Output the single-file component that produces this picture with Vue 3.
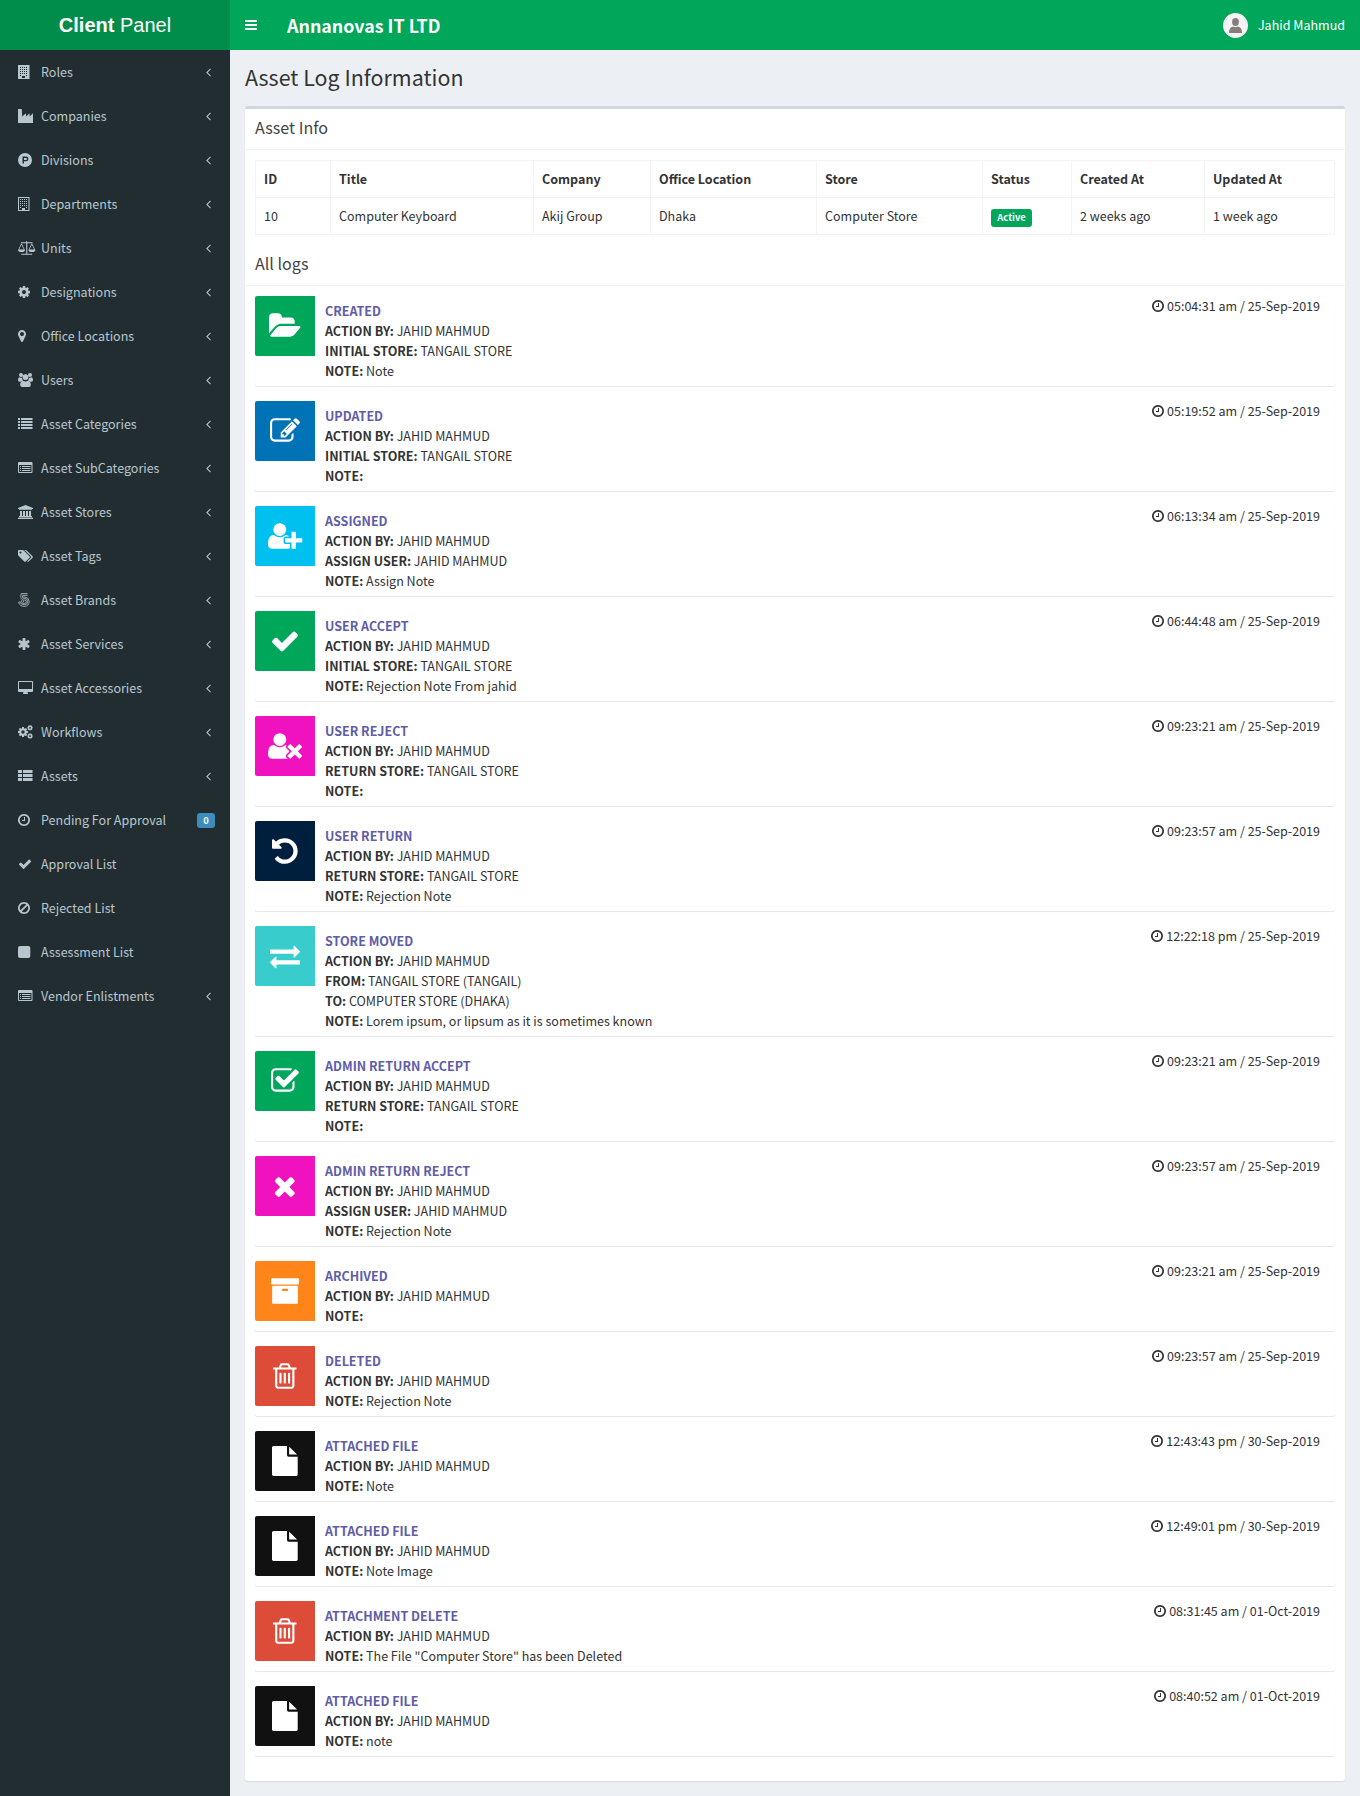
<script setup>
const cog = 'M1152 896q0-106-75-181t-181-75-181 75-75 181 75 181 181 75 181-75 75-181zm512-109v222q0 12-8 23t-20 13l-185 28q-19 54-39 91 35 50 107 138 10 12 10 25t-9 23q-27 37-99 108t-94 71q-12 0-26-9l-138-108q-44 23-91 38-16 136-29 186-7 28-36 28h-222q-14 0-24.5-8.5t-11.5-21.5l-28-184q-49-16-90-37l-141 107q-10 9-25 9-14 0-25-11-126-114-165-168-7-10-7-23 0-12 8-23 15-21 51-66.5t54-70.5q-27-50-41-99l-183-27q-13-2-21-12.5t-8-23.5v-222q0-12 8-23t19-13l186-28q14-46 39-92-40-57-107-138-10-12-10-24 0-10 9-23 26-36 98.5-107.5t94.5-71.5q13 0 26 10l138 107q44-23 91-38 16-136 29-186 7-28 36-28h222q14 0 24.5 8.5t11.5 21.5l28 184q49 16 90 37l142-107q9-9 24-9 13 0 25 10 129 119 165 170 7 8 7 22 0 12-8 23-15 21-51 66.5t-54 70.5q26 50 41 98l183 28q13 2 21 12.5t8 23.5z'
const head = 'M704 896q-159 0-271.5-112.5t-112.5-271.5 112.5-271.5 271.5-112.5 271.5 112.5 112.5 271.5-112.5 271.5-271.5 112.5z'

// Each glyph: viewBox x offset, viewBox width, em height, path list
const big = (x, w, ...d) => ({ x, w, em: 1792, paths: d.map((p) => (typeof p === 'string' ? { d: p } : p)) })
const small = (w, ...d) => ({ x: 0, w, em: 14, paths: d.map((p) => (typeof p === 'string' ? { d: p } : p)) })

const dots = (xs, ys) => ys.map((y) => xs.map((x) => `M${x} ${y}h1v1h-1z`).join('')).join('')

const icons = {
  bars: big(128, 1536, 'M1664 1344v128q0 26-19 45t-45 19h-1408q-26 0-45-19t-19-45v-128q0-26 19-45t45-19h1408q26 0 45 19t19 45zm0-512v128q0 26-19 45t-45 19h-1408q-26 0-45-19t-19-45v-128q0-26 19-45t45-19h1408q26 0 45 19t19 45zm0-512v128q0 26-19 45t-45 19h-1408q-26 0-45-19t-19-45v-128q0-26 19-45t45-19h1408q26 0 45 19t19 45z'),
  building: small(11, 'M0 0h11.5v14H0z' + dots([2, 4, 6, 8], [2, 4, 6, 8]) + 'M2 10h1v1H2zM8 10h1v1H8zM4 11h3v2H4z'),
  buildingO: small(11, 'M0 0h11.5v14H0zM1 1v12h3v-2h3v2h3.5V1z' + dots([2, 4, 6, 8], [2, 4, 6, 8]) + 'M2 10h1v1H2zM8 10h1v1H8z'),
  industry: small(15, 'M0 0h3.8l.4 7.4L8 4.3v3.1l3.6-3.1v3.1L15 4.3V14H0z'),
  product: small(14, 'M7 0a7 7 0 1 1 0 14A7 7 0 0 1 7 0zM4.5 3.6v6.8H6V8.3h2a2.35 2.35 0 0 0 0-4.7zM6 5h2a.95.95 0 0 1 0 1.9H6z'),
  balance: small(17.5, 'M8.2 0h1v1.3h5.3v.9H9.3v10.6h4.9v1H3.300v-1h4.9V2.200H3v-.9h5.200z', 'M3.500 2l3.400 6.900q0 2-3.400 2T.1 8.900zM3.500 3.800L1.100 8.600h4.800zM13.900 2l3.400 6.900q0 2-3.400 2t-3.400-2zM13.900 3.800l-2.400 4.800h4.800z'),
  cog: big(128, 1536, cog),
  marker: big(384, 1024, 'M1152 640q0-106-75-181t-181-75-181 75-75 181 75 181 181 75 181-75 75-181zm256 0q0 109-33 179l-364 774q-16 33-47.5 52t-67.5 19-67.5-19-46.5-52l-365-774q-33-70-33-179 0-212 150-362t362-150 362 150 150 362z'),
  users: small(15, 'M3 0a2 2 0 1 1 0 4 2 2 0 0 1 0-4zM12 0a2 2 0 1 1 0 4 2 2 0 0 1 0-4zM7.500 1.200a2.900 2.900 0 1 1 0 5.800 2.900 2.900 0 0 1 0-5.800z', 'M1.500 4.200q2 1 2.600.6 0 2 1 3-1.700 0-2.300 1H1.500Q0 8.700 0 7.300q0-3 1.500-3.100zM13.500 4.200q-2 1-2.600.6 0 2-1 3 1.700 0 2.300 1h1.300q1.500-.1 1.500-1.500 0-3-1.500-3.100z', 'M4.800 7.700q2.700 1.500 5.400 0 2.600.3 2.600 4.300 0 2-2 2H4.200q-2 0-2-2 0-4 2.600-4.300z'),
  list: small(14.5, 'M0 1h2v2H0zM3 1h11.500v2H3zM0 4h2v2H0zM3 4h11.500v2H3zM0 7h2v2H0zM3 7h11.500v2H3zM0 10h2v2H0zM3 10h11.500v2H3z'),
  listAlt: small(14.5, 'M1 1h12.500q1 0 1 1v9q0 1-1 1H1q-1 0-1-1V2q0-1 1-1zM1 4v7h12.500V4zM2 5h1v1H2zM4 5h8.500v1H4zM2 7h1v1H2zM4 7h8.500v1H4zM2 9h1v1H2zM4 9h8.500v1H4z'),
  bank: small(15, 'M7.500 0L15 3v1h-1v.8H1V4H0V3zM2 6h2v5h1V6h2v5h1V6h2v5h1V6h2v5h1v1H1v-1h1zM.5 12.500h14v.5h.5v1H0v-1h.5z'),
  tags: big(0, 1920, 'M448 448q0-53-37.500-90.500t-90.500-37.500-90.500 37.500-37.500 90.500 37.500 90.500 90.500 37.500 90.500-37.500 37.500-90.500zm1067 576q0 53-37 90l-491 492q-39 37-91 37-53 0-90-37l-715-716q-38-37-64.500-101t-26.500-117v-416q0-52 38-90t90-38h416q53 0 117 26.500t102 64.500l715 714q37 39 37 91zm384 0q0 53-37 90l-491 492q-39 37-91 37-36 0-59-14t-53-45l470-470q37-37 37-90 0-52-37-91l-715-714q-38-38-102-64.500t-117-26.500h224q53 0 117 26.500t102 64.500l715 714q37 39 37 91z'),
  fiveHundred: small(12, { d: 'M9.600 .6H3.200L2.600 4.400M9.600 2.300H4.800L4.500 3.900M2.600 5.900Q4.300 3.800 7 4q4.100.6 4.200 4.600-.2 4.400-4.700 4.800-4.500.1-6-4.100L2 8.800q.9 3 4.200 3 3.200 0 3.500-3.100 0-3-3-3.300-3.100.2-3.300 3.200.3 1.800 2.900 2 1.900-.1 2-2-.2-1.500-1.800-1.500-1.600.2-1 1.900', stroke: true }),
  asterisk: big(128, 1536, 'M1546 1050q46 26 59.500 77.500t-12.500 97.500l-64 110q-26 46-77.500 59.500t-97.500-12.500l-266-153v307q0 52-38 90t-90 38h-128q-52 0-90-38t-38-90v-307l-266 153q-46 26-97.500 12.500t-77.500-59.500l-64-110q-26-46-12.500-97.500t59.500-77.500l266-154-266-154q-46-26-59.500-77.500t12.500-97.500l64-110q26-46 77.500-59.500t97.500 12.500l266 153v-307q0-52 38-90t90-38h128q52 0 90 38t38 90v307l266-153q46-26 97.500-12.500t77.500 59.500l64 110q26 46 12.500 97.500t-59.500 77.500l-266 154z'),
  desktop: small(15, 'M1 0h13q1 0 1 1v9q0 1-1 1H9.500q0 1 .5 1.300v.7H5v-.7q.5-.3.500-1.300H1q-1 0-1-1V1q0-1 1-1zM1 1v7h13V1z'),
  cogs: big(0, 1920, { d: cog, transform: 'translate(-107 149) scale(.835)' }, { d: cog, transform: 'translate(1130 -50) scale(.46)' }, { d: cog, transform: 'translate(1130 1000) scale(.46)' }),
  thList: small(14.5, 'M0 1h4v3H0zM5 1h9.500v3H5zM0 5h4v3H0zM5 5h9.500v3H5zM0 9h4v3H0zM5 9h9.500v3H5z'),
  clock: big(128, 1536, 'M1024 544v448q0 14-9 23t-23 9h-320q-14 0-23-9t-9-23v-64q0-14 9-23t23-9h224v-352q0-14 9-23t23-9h64q14 0 23 9t9 23zm416 352q0-148-73-273t-198-198-273-73-273 73-198 198-73 273 73 273 198 198 273 73 273-73 198-198 73-273zm224 0q0 209-103 385.500t-279.500 279.500-385.500 103-385.500-103-279.500-279.500-103-385.500 103-385.500 279.500-279.500 385.500-103 385.500 103 279.500 279.500 103 385.500z'),
  check: big(0, 1792, 'M1671 566q0 40-28 68l-724 724-136 136q-28 28-68 28t-68-28l-136-136-362-362q-28-28-28-68t28-68l136-136q28-28 68-28t68 28l294 295 656-657q28-28 68-28t68 28l136 136q28 28 28 68z'),
  ban: big(128, 1536, 'M1440 893q0-161-87-295l-754 753q137 89 297 89 111 0 211.500-43.500t173.500-116.500 116-174.500 43-212.500zm-999 299l755-754q-135-91-300-91-148 0-273 73t-198 199-73 274q0 162 89 299zm1223-299q0 157-61 300t-163.500 246-245 164-298.500 61-298.500-61-245-164-163.500-246-61-300 61-299.500 163.500-245.500 245-164 298.500-61 298.500 61 245 164 163.500 245.500 61 299.500z'),
  square: small(12, 'M2 1h8.300q2 0 2 2v8q0 2-2 2H2q-2 0-2-2V3q0-2 2-2z'),
  angle: big(589, 614, 'M1203 544q0 13-10 23l-393 393 393 393q10 10 10 23t-10 23l-50 50q-10 10-23 10t-23-10l-466-466q-10-10-10-23t10-23l466-466q10-10 23-10t23 10l50 50q10 10 10 23z'),
  folder: big(0, 1920, 'M1879 952q0 31-31 66l-336 396q-43 51-120.500 86.500t-143.500 35.500h-1088q-34 0-60.500-13t-26.500-43q0-31 31-66l336-396q43-51 120.500-86.500t143.500-35.500h1088q34 0 60.500 13t26.500 43zm-343-344v160h-832q-94 0-197 47.500t-164 119.500l-337 396-5 6q0-4-.5-12.500t-.5-12.500v-960q0-92 66-158t158-66h320q92 0 158 66t66 158v32h544q92 0 158 66t66 158z'),
  edit: big(0, 1792, 'M888 1184l116-116-152-152-116 116v56h96v96h56zm440-720q-16-16-33 1l-350 350q-17 17-1 33t33-1l350-350q17-17 1-33zm80 594v190q0 119-84.500 203.500t-203.500 84.500h-832q-119 0-203.500-84.500t-84.500-203.500v-832q0-119 84.500-203.500t203.500-84.500h832q63 0 117 25 15 7 18 23 3 17-9 29l-49 49q-14 14-32 8-23-6-45-6h-832q-66 0-113 47t-47 113v832q0 66 47 113t113 47h832q66 0 113-47t47-113v-126q0-13 9-22l64-64q15-15 35-7t20 29zm-96-738l288 288-672 672h-288v-288zm444 132l-92 92-288-288 92-92q28-28 68-28t68 28l152 152q28 28 28 68t-28 68z'),
  userPlus: big(0, 2048, head, 'M1664 1024h352q13 0 22.500 9.500t9.500 22.500v192q0 13-9.500 22.500t-22.500 9.500h-352v352q0 13-9.500 22.500t-22.500 9.500h-192q-13 0-22.500-9.500t-9.500-22.500v-352h-352q-13 0-22.500-9.500t-9.500-22.500v-192q0-13 9.500-22.500t22.500-9.500h352v-352q0-13 9.500-22.500t22.500-9.500h192q13 0 22.500 9.500t9.500 22.500v352zm-736 224q0 52 38 90t90 38h256v238q-68 50-171 50h-874q-121 0-194-69t-73-190q0-53 3.500-103.500t14-109 26.500-108.500 43-97.500 62-81 85.500-53.500 111.500-20q19 0 39 17 79 61 154.500 91.500t164.500 30.500 164.500-30.500 154.500-91.500q20-17 39-17 132 0 217 96h-223q-52 0-90 38t-38 90v192z'),
  userTimes: big(0, 2048, head, 'M1781 1216l249 249q9 9 9 23 0 13-9 22l-136 136q-9 9-22 9-14 0-23-9l-249-249-249 249q-9 9-23 9-13 0-22-9l-136-136q-9-9-9-22 0-14 9-23l249-249-249-249q-9-9-9-23 0-13 9-22l136-136q9-9 22-9 14 0 23 9l249 249 249-249q9-9 23-9 13 0 22 9l136 136q9 9 9 22 0 14-9 23zm-498 0l-181 181q-37 37-37 91 0 53 37 90l83 83q-21 3-44 3h-874q-121 0-194-69t-73-190q0-53 3.500-103.500t14-109 26.500-108.500 43-97.500 62-81 85.500-53.500 111.500-20q19 0 39 17 154 122 319 122t319-122q20-17 39-17 28 0 57 6-28 27-41 50t-13 56q0 54 37 91z'),
  undo: big(128, 1536, 'M1664 896q0 156-61 298t-164 245-245 164-298 61q-172 0-327-72.500t-264-204.500q-7-10-6.500-22.500t8.500-20.500l137-138q10-9 25-9 16 2 23 12 73 95 179 147t225 52q104 0 198.500-40.500t163.500-109.500 109.500-163.500 40.500-198.500-40.500-198.500-109.500-163.500-163.500-109.500-198.500-40.500q-98 0-188 35.500t-160 101.500l137 138q31 30 14 69-17 40-59 40h-448q-26 0-45-19t-19-45v-448q0-42 40-59 39-17 69 14l130 129q107-101 244.500-156.500t284.500-55.500q156 0 298 61t245 164 164 245 61 298z'),
  exchange: big(0, 1792, 'M1792 1184v192q0 13-9.500 22.500t-22.500 9.500h-1376v192q0 13-9.500 22.500t-22.500 9.500q-12 0-24-10l-319-320q-9-9-9-22 0-14 9-23l320-320q9-9 23-9 13 0 22.500 9.500t9.500 22.500v192h1376q13 0 22.500 9.500t9.500 22.500zm0-544q0 14-9 23l-320 320q-9 9-23 9-13 0-22.500-9.500t-9.500-22.500v-192h-1376q-13 0-22.500-9.500t-9.500-22.500v-192q0-13 9.500-22.500t22.500-9.500h1376v-192q0-14 9-23t23-9q12 0 24 10l319 319q9 9 9 23z'),
  checkSquare: big(64, 1664, 'M1472 930v318q0 119-84.500 203.500t-203.500 84.500h-832q-119 0-203.500-84.500t-84.500-203.500v-832q0-119 84.500-203.500t203.500-84.500h832q63 0 117 25 15 7 18 23 3 17-9 29l-49 49q-10 10-23 10-3 0-9-2-23-6-45-6h-832q-66 0-113 47t-47 113v832q0 66 47 113t113 47h832q66 0 113-47t47-113v-254q0-13 9-22l64-64q10-10 23-10 6 0 12 3 20 8 20 29zm231-489l-814 814q-24 24-57 24t-57-24l-430-430q-24-24-24-57t24-57l110-110q24-24 57-24t57 24l263 263 647-647q24-24 57-24t57 24l110 110q24 24 24 57t-24 57z'),
  times: big(192, 1408, 'M1490 1322q0 40-28 68l-136 136q-28 28-68 28t-68-28l-294-294-294 294q-28 28-68 28t-68-28l-136-136q-28-28-28-68t28-68l294-294-294-294q-28-28-28-68t28-68l136-136q28-28 68-28t68 28l294 294 294-294q28-28 68-28t68 28l136 136q28 28 28 68t-28 68l-294 294 294 294q28 28 28 68z'),
  archive: big(0, 1792, 'M1088 832q0-26-19-45t-45-19h-256q-26 0-45 19t-19 45 19 45 45 19h256q26 0 45-19t19-45zm576-192v960q0 26-19 45t-45 19h-1408q-26 0-45-19t-19-45v-960q0-26 19-45t45-19h1408q26 0 45 19t19 45zm64-448v256q0 26-19 45t-45 19h-1536q-26 0-45-19t-19-45v-256q0-26 19-45t45-19h1536q26 0 45 19t19 45z'),
  trash: big(192, 1408, 'M704 736v576q0 14-9 23t-23 9h-64q-14 0-23-9t-9-23v-576q0-14 9-23t23-9h64q14 0 23 9t9 23zm256 0v576q0 14-9 23t-23 9h-64q-14 0-23-9t-9-23v-576q0-14 9-23t23-9h64q14 0 23 9t9 23zm256 0v576q0 14-9 23t-23 9h-64q-14 0-23-9t-9-23v-576q0-14 9-23t23-9h64q14 0 23 9t9 23zm128 724v-948h-896v948q0 22 7 40.500t14.500 27 10.500 8.500h832q3 0 10.500-8.500t14.500-27 7-40.500zm-672-1076h448l-48-117q-7-9-17-11h-317q-10 2-17 11zm928 32v64q0 14-9 23t-23 9h-96v948q0 83-47 143.500t-113 60.500h-832q-66 0-113-58.500t-47-141.500v-952h-96q-14 0-23-9t-9-23v-64q0-14 9-23t23-9h309l70-167q15-37 54-63t79-26h320q40 0 79 26t54 63l70 167h309q14 0 23 9t9 23z'),
  file: big(128, 1536, 'M1152 512v-472q22 14 36 28l408 408q14 14 28 36h-472zm-128 32q0 40 28 68t68 28h544v1056q0 40-28 68t-68 28h-1344q-40 0-68-28t-28-68v-1600q0-40 28-68t68-28h800v544z'),
}

const Glyph = (props) => {
  const g = icons[props.name]
  const size = Number(props.size)
  return h(
    'svg',
    { width: (g.w / g.em) * size, height: size, viewBox: `${g.x} 0 ${g.w} ${g.em}`, fill: 'currentColor', overflow: 'visible', style: 'display:block;flex:none' },
    g.paths.map((p) =>
      h('path', p.stroke
        ? { d: p.d, fill: 'none', stroke: 'currentColor', 'stroke-width': 0.8 }
        : { d: p.d, transform: p.transform, 'fill-rule': 'evenodd' })
    )
  )
}
Glyph.props = ['name', 'size']

const menu = [
  ['building', 'Roles', 1], ['industry', 'Companies', 1], ['product', 'Divisions', 1],
  ['buildingO', 'Departments', 1], ['balance', 'Units', 1], ['cog', 'Designations', 1],
  ['marker', 'Office Locations', 1], ['users', 'Users', 1], ['list', 'Asset Categories', 1],
  ['listAlt', 'Asset SubCategories', 1], ['bank', 'Asset Stores', 1], ['tags', 'Asset Tags', 1],
  ['fiveHundred', 'Asset Brands', 1], ['asterisk', 'Asset Services', 1], ['desktop', 'Asset Accessories', 1],
  ['cogs', 'Workflows', 1], ['thList', 'Assets', 1], ['clock', 'Pending For Approval', 0, '0'],
  ['check', 'Approval List', 0], ['ban', 'Rejected List', 0], ['square', 'Assessment List', 0],
  ['listAlt', 'Vendor Enlistments', 1],
].map(([icon, label, arrow, badge]) => ({ icon, label, arrow, badge }))

const columns = [
  ['ID', '10', 75], ['Title', 'Computer Keyboard', 203], ['Company', 'Akij Group', 117],
  ['Office Location', 'Dhaka', 166], ['Store', 'Computer Store', 166], ['Status', 'Active', 89],
  ['Created At', '2 weeks ago', 133], ['Updated At', '1 week ago', 130],
].map(([title, value, width]) => ({ title, value, width }))

const by = ['ACTION BY:', 'JAHID MAHMUD']
const initial = ['INITIAL STORE:', 'TANGAIL STORE']
const returned = ['RETURN STORE:', 'TANGAIL STORE']
const assign = ['ASSIGN USER:', 'JAHID MAHMUD']
const note = (text = '') => ['NOTE:', text]

const logs = [
  { icon: 'folder', tone: 'green', title: 'CREATED', rows: [by, initial, note('Note')], time: '05:04:31 am / 25-Sep-2019' },
  { icon: 'edit', tone: 'blue', title: 'UPDATED', rows: [by, initial, note()], time: '05:19:52 am / 25-Sep-2019' },
  { icon: 'userPlus', tone: 'aqua', title: 'ASSIGNED', rows: [by, assign, note('Assign Note')], time: '06:13:34 am / 25-Sep-2019' },
  { icon: 'check', tone: 'green', title: 'USER ACCEPT', rows: [by, initial, note('Rejection Note From jahid')], time: '06:44:48 am / 25-Sep-2019' },
  { icon: 'userTimes', tone: 'fuchsia', title: 'USER REJECT', rows: [by, returned, note()], time: '09:23:21 am / 25-Sep-2019' },
  { icon: 'undo', tone: 'navy', title: 'USER RETURN', rows: [by, returned, note('Rejection Note')], time: '09:23:57 am / 25-Sep-2019' },
  { icon: 'exchange', tone: 'teal', title: 'STORE MOVED', rows: [by, ['FROM:', 'TANGAIL STORE (TANGAIL)'], ['TO:', 'COMPUTER STORE (DHAKA)'], note('Lorem ipsum, or lipsum as it is sometimes known')], time: '12:22:18 pm / 25-Sep-2019' },
  { icon: 'checkSquare', tone: 'green', title: 'ADMIN RETURN ACCEPT', rows: [by, returned, note()], time: '09:23:21 am / 25-Sep-2019' },
  { icon: 'times', tone: 'fuchsia', title: 'ADMIN RETURN REJECT', rows: [by, assign, note('Rejection Note')], time: '09:23:57 am / 25-Sep-2019' },
  { icon: 'archive', tone: 'orange', title: 'ARCHIVED', rows: [by, note()], time: '09:23:21 am / 25-Sep-2019' },
  { icon: 'trash', tone: 'red', title: 'DELETED', rows: [by, note('Rejection Note')], time: '09:23:57 am / 25-Sep-2019' },
  { icon: 'file', tone: 'black', title: 'ATTACHED FILE', rows: [by, note('Note')], time: '12:43:43 pm / 30-Sep-2019' },
  { icon: 'file', tone: 'black', title: 'ATTACHED FILE', rows: [by, note('Note Image')], time: '12:49:01 pm / 30-Sep-2019' },
  { icon: 'trash', tone: 'red', title: 'ATTACHMENT DELETE', rows: [by, note('The File "Computer Store" has been Deleted')], time: '08:31:45 am / 01-Oct-2019' },
  { icon: 'file', tone: 'black', title: 'ATTACHED FILE', rows: [by, note('note')], time: '08:40:52 am / 01-Oct-2019' },
]
</script>

<script>
import { h } from 'vue'
</script>

<template>
  <div class="page">
    <header class="topbar">
      <div class="logo"><span><b>Client</b> Panel</span></div>
      <nav class="navbar">
        <Glyph name="bars" size="14" />
        <span class="brand">Annanovas IT LTD</span>
        <div class="user">
          <svg width="25" height="25" viewBox="0 0 25 25">
            <circle cx="12.5" cy="12.5" r="12.500" fill="#f5f4f4" />
            <ellipse cx="12.5" cy="9" rx="3.400" ry="4" fill="#877b7c" />
            <path d="M6 20q0-6 4-6.600 2.500 1.500 5 0 4 .6 4 6.600z" fill="#877b7c" />
          </svg>
          <span>Jahid Mahmud</span>
        </div>
      </nav>
    </header>

    <div class="main">
      <aside class="sidebar">
        <a v-for="item in menu" :key="item.label" class="item">
          <span class="item-icon"><Glyph :name="item.icon" size="14" /></span>
          <span class="item-label">{{ item.label }}</span>
          <span v-if="item.badge" class="badge">{{ item.badge }}</span>
          <span v-if="item.arrow" class="arrow"><Glyph name="angle" size="14" /></span>
        </a>
      </aside>

      <section class="content">
        <h1>Asset Log Information</h1>
        <div class="box">
          <div class="box-header">Asset Info</div>
          <div class="table-wrap">
            <table>
              <colgroup>
                <col v-for="c in columns" :key="c.title" :style="{ width: c.width + 'px' }" />
              </colgroup>
              <thead>
                <tr><th v-for="c in columns" :key="c.title">{{ c.title }}</th></tr>
              </thead>
              <tbody>
                <tr>
                  <td v-for="c in columns" :key="c.title">
                    <span v-if="c.title === 'Status'" class="label">{{ c.value }}</span>
                    <template v-else>{{ c.value }}</template>
                  </td>
                </tr>
              </tbody>
            </table>
          </div>
          <div class="box-header">All logs</div>
          <div class="logs">
            <article v-for="(log, i) in logs" :key="i" class="log">
              <div class="log-icon" :class="log.tone"><Glyph :name="log.icon" size="30" /></div>
              <div class="log-body">
                <div class="log-title">{{ log.title }}</div>
                <div v-for="row in log.rows" :key="row[0]"><b>{{ row[0] }}</b> <span>{{ row[1] }}</span></div>
              </div>
              <div class="time"><Glyph name="clock" size="14" /><span>{{ log.time }}</span></div>
            </article>
          </div>
        </div>
      </section>
    </div>
  </div>
</template>

<style>
body {
  margin: 0;
  background: #ecf0f5;
}
</style>

<style scoped>
.page {
  width: 1360px;
  height: 1796px;
  display: flex;
  flex-direction: column;
  overflow: hidden;
  box-sizing: border-box;
  background: #ecf0f5;
  color: #333;
  font: 12.53px/20px "Noto Sans CJK JP", "Noto Sans CJK SC", sans-serif;
}
.topbar {
  display: flex;
  height: 50px;
  color: #fff;
}
.logo {
  flex: none;
  width: 230px;
  background: #008d4c;
  font: 20px/50px "Liberation Sans", Arial, sans-serif;
  text-align: center;
}
.navbar {
  flex: 1;
  display: flex;
  align-items: center;
  padding: 0 15px;
  background: #00a65a;
}
.brand {
  margin-left: 30px;
  font-size: 17.85px;
  font-weight: 700;
}
.user {
  margin-left: auto;
  display: flex;
  align-items: center;
  gap: 10px;
}
.main {
  flex: 1;
  display: flex;
}
.sidebar {
  flex: none;
  width: 230px;
  background: #222d32;
  color: #b8c7ce;
}
.item {
  display: flex;
  align-items: center;
  height: 44px;
  padding: 0 15px 0 18px;
  box-sizing: border-box;
}
.item-icon {
  width: 23px;
}
.arrow {
  margin-left: auto;
  margin-right: 4.5px;
}
.badge {
  margin-left: auto;
  width: 18px;
  height: 15px;
  margin-top: 1px;
  border-radius: 3px;
  background: #3c8dbc;
  color: #fff;
  font-size: 9.4px;
  font-weight: 700;
  line-height: 14px;
  text-align: center;
}
.content {
  flex: 1;
  min-width: 0;
  padding: 14px 15px 0;
}
h1 {
  margin: 0 0 16px;
  font-size: 21.45px;
  font-weight: 400;
  line-height: 26px;
}
.box {
  border-top: 3px solid #d2d6de;
  border-radius: 3px;
  background: #fff;
  box-shadow: 0 1px 1px rgba(0, 0, 0, 0.1);
}
.box-header {
  height: 40px;
  padding: 0 10px;
  border-bottom: 1px solid #f4f4f4;
  color: #444;
  font-size: 16.1px;
  line-height: 37px;
}
.table-wrap {
  padding: 10px;
}
table {
  width: 1080px;
  table-layout: fixed;
  border-collapse: separate;
  border-spacing: 0;
  border-top: 1px solid #f4f4f4;
  border-left: 1px solid #f4f4f4;
}
th,
td {
  height: 36px;
  padding: 0 8px;
  border-right: 1px solid #f4f4f4;
  border-bottom: 1px solid #f4f4f4;
  text-align: left;
  vertical-align: middle;
}
.label {
  display: block;
  width: 41px;
  height: 18px;
  margin-top: 3px;
  border-radius: 3px;
  background: #00a65a;
  color: #fff;
  font-size: 9.4px;
  font-weight: 700;
  line-height: 17px;
  text-align: center;
}
.logs {
  padding: 10px;
}
.log {
  display: flex;
  align-items: flex-start;
  margin-bottom: 15px;
  border-radius: 2px;
  background: #fff;
  box-shadow: 0 1px 1px rgba(0, 0, 0, 0.1);
}
.log-icon {
  width: 60px;
  height: 60px;
  display: flex;
  align-items: center;
  justify-content: center;
  border-radius: 2px 0 0 2px;
  color: #fff;
}
.log-body {
  flex: 1;
  padding: 5px 10px;
}
.log-title {
  color: #605ca8;
  font-weight: 700;
}
.time {
  display: flex;
  align-items: center;
  gap: 3px;
  margin-right: 15px;
}
.green { background: #00a65a; }
.blue { background: #0073b7; }
.aqua { background: #00c0ef; }
.fuchsia { background: #f012be; }
.navy { background: #001f3f; }
.teal { background: #39cccc; }
.orange { background: #ff851b; }
.red { background: #dd4b39; }
.black { background: #111; }
</style>
